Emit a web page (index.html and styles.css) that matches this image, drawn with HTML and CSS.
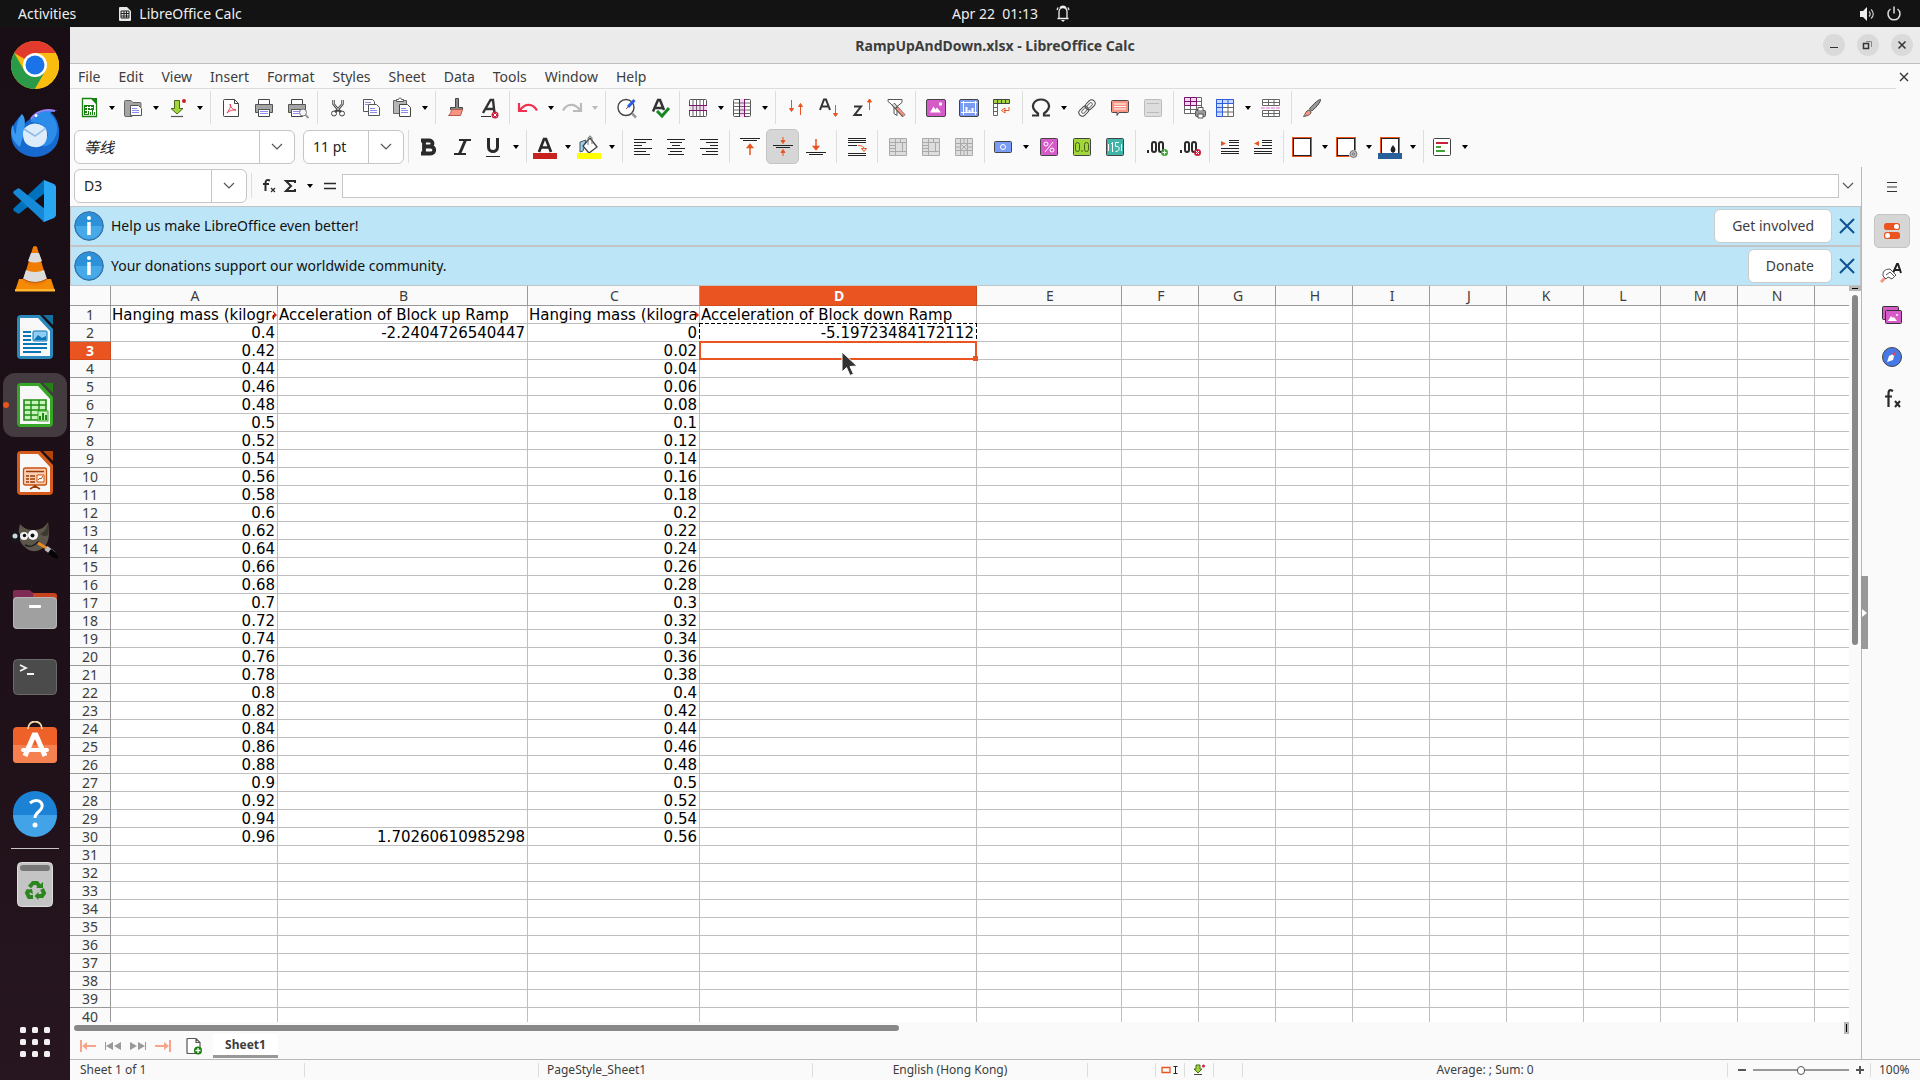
FILE: index.html
```html
<!DOCTYPE html>
<html lang="en">
<head>
<meta charset="utf-8">
<title>RampUpAndDown.xlsx - LibreOffice Calc</title>
<link rel="stylesheet" href="styles.css">
</head>
<body>
<header class="topbar">
  <div class="topbar-left">
    <button class="top-btn">Activities</button>
    <button class="top-btn top-app"><svg width="14" height="16" viewBox="0 0 14 16"><path d="M2 1h7l4 4v9a1 1 0 0 1-1 1H2a1 1 0 0 1-1-1V2a1 1 0 0 1 1-1z" fill="#e8e8e8"/><path d="M3 5h8v7H3zM3 7.500h8M3 10h8M6 5v7M8.500 5v7" fill="none" stroke="#222"/></svg>LibreOffice Calc</button>
  </div>
  <button class="top-btn top-clock"><span>Apr 22&nbsp; 01:13</span><svg width="14" height="17" viewBox="0 0 14 17" fill="none" stroke="#eee" stroke-width="1.300"><path d="M1.500 13.500h11M3 13.500V7c0-6 8-6 8 0v6.500M4 3C5 .5 9 .5 10 3M2 2.500L1 5M12 2.500l1 2.500"/><path d="M5 15h4l-2 2z" fill="#eee" stroke="none"/></svg></button>
  <div class="topbar-right">
    <svg width="16" height="16" viewBox="0 0 16 16"><path d="M1 5h3l4-4v14l-4-4H1z" fill="#eee"/><path d="M10 5.500c1.500 1.500 1.500 3.500 0 5M12 3.500c3 2.500 3 6.500 0 9" stroke="#ccc" stroke-width="1.200" fill="none"/></svg>
    <svg width="16" height="16" viewBox="0 0 16 16" fill="none" stroke="#ddd" stroke-width="1.500"><path d="M4.500 3a6 6 0 1 0 7 0M8 .5v7"/></svg>
  </div>
</header>
<div class="desktop">
<nav class="dock" aria-label="Dock">
  <button class="dock-item" aria-label="Google Chrome"><svg viewBox="0 0 48 48"><circle cx="24" cy="24" r="24" fill="#fbbc10"/><path d="M3.200 12A24 24 0 0 1 44.800 12H24L13.600 18z" fill="#e23b2e"/><path d="M3.200 12L13.600 30 24 36l0 0L24.500 48A24 24 0 0 1 3.200 12z" fill="#2b9a48"/><path d="M24 48L34.400 30H15l-1 0L24 36z" fill="#2b9a48"/><path d="M34.400 30L24 48a24 24 0 0 0 20.800-36H24z" fill="#fbbc10"/><circle cx="24" cy="24" r="12" fill="#fff"/><circle cx="24" cy="24" r="9.500" fill="#1a73e8"/></svg></button>
  <button class="dock-item" aria-label="Thunderbird"><svg viewBox="0 0 48 48"><path d="M11 5C4 12 0 19 0 26a24 22 0 0 0 48 0C49 14 44 5 36 1c4 0 7 0 11 1C34-1 23 2 19 10c-6 4-8 8-8 14 1-8 1-13 0-19z" fill="#1769cf"/><path d="M20 10c5-9 15-11 27-8-6 0-8 1-8 3 9 7 9 19 3 27-4 6-10 6-15 4l10-9c0-9-7-14-17-14z" fill="#2c8cea"/><path d="M11 5c4 4 3 10 2 18L9 38C-1 31-1 19 2 16c1 4 1 8 3 9 0-9 2-15 6-20z" fill="#3a9bf0"/><path d="M12 25a12 10 0 0 1 24-1c1 10-5 15-13 14s-11-6-11-13z" fill="#dcecfb"/><path d="M13 20l11 7 11-8" fill="none" stroke="#8fb9e5" stroke-width="1.500"/><path d="M20 10C26 1 36 0 44 2" fill="none" stroke="#9a7df0" stroke-width="2"/><circle cx="25" cy="6.500" r="1.500" fill="#fff"/></svg></button>
  <button class="dock-item" aria-label="Visual Studio Code"><svg viewBox="0 0 48 48"><path d="M33 3L3 31c-1 1-1 2 0 3l3 2c1 1 2 1 3 0L35 15z" fill="#0072bd"/><path d="M33 45L3 17c-1-1-1-2 0-3l3-2c1-1 2-1 3 0l26 21z" fill="#1689d8"/><path d="M33 3l10 4c1 1 2 2 2 3v28c0 1-1 2-2 3l-10 4c-1 0-1 0 0-1z" fill="#2aa7f2"/></svg></button>
  <button class="dock-item" aria-label="VLC"><svg viewBox="0 0 48 48"><path d="M8 34h32l4 12H4z" fill="#f58a07"/><path d="M4 44h40v2.500H4z" fill="#ffb52e"/><path d="M22 2q2-2 4 0l10 34q-12 9-24 0z" fill="#f07c04"/><path d="M20 8h8l3 8q-7 3-14 0zM15 25q9 4 18 0l3 9q-12 7-24 0z" fill="#dcdcdc"/><path d="M12 34q12 7 24 0" fill="none" stroke="#b75600"/></svg></button>
  <button class="dock-item" aria-label="LibreOffice Writer"><svg viewBox="0 0 48 48"><path d="M10 2h19l13 14v26a4 4 0 0 1-4 4H10a4 4 0 0 1-4-4V6a4 4 0 0 1 4-4z" fill="#2a88bd"/><path d="M9 5h18l12 13v25H9z" fill="#f8f8f8"/><path d="M32 2h10v10z" fill="#14719f"/><path d="M12 19h8M12 23h8M12 27h8M12 31h24M12 35h24M12 39h18" stroke="#0b76b5" stroke-width="2.200"/><rect x="22" y="18" width="14" height="10" rx="1" fill="#90cdf2" stroke="#0b76b5"/><path d="M23 27l4-5 4 3 4-2v4z" fill="#0b76b5"/></svg></button>
  <button class="dock-item active" aria-label="LibreOffice Calc"><svg viewBox="0 0 48 48"><path d="M10 2h19l13 14v26a4 4 0 0 1-4 4H10a4 4 0 0 1-4-4V6a4 4 0 0 1 4-4z" fill="#37a626"/><path d="M9 5h18l12 13v25H9z" fill="#f8f8f8"/><path d="M32 2h10v10z" fill="#258016"/><path d="M13 19h22v20H13z" fill="#c9f3bd" stroke="#1f8a12" stroke-width="1.600"/><path d="M13 24h22M13 29h22M13 34h22M20 19v20M28 19v20" stroke="#1f8a12" stroke-width="1.400"/><rect x="27" y="30" width="10" height="10" fill="#c9f3bd" stroke="#37a626"/><path d="M29 39v-4M32 39v-7M35 39v-5" stroke="#1f8a12" stroke-width="2"/></svg></button>
  <button class="dock-item" aria-label="LibreOffice Impress"><svg viewBox="0 0 48 48"><path d="M10 2h19l13 14v26a4 4 0 0 1-4 4H10a4 4 0 0 1-4-4V6a4 4 0 0 1 4-4z" fill="#d55b1d"/><path d="M9 5h18l12 13v25H9z" fill="#f8f8f8"/><path d="M32 2h10v10z" fill="#b34508"/><rect x="12.500" y="19" width="23" height="17" rx="2" fill="#fbd0b6" stroke="#c8500f" stroke-width="1.300"/><path d="M15 22.500h18M15 27h3M15 30h3M15 33h3M19 27h5M19 30h5M19 33h5M24 36v3M24 37l-5 3M24 37l5 3" stroke="#9c3b06" stroke-width="1.500"/><path d="M26 26h7v7h-7zM27 31l2-2 1 1 2-3" fill="#fff" stroke="#c8500f"/></svg></button>
  <button class="dock-item" aria-label="GIMP"><svg viewBox="0 0 48 48"><path d="M9 7c4 5 9 6 14 6 7 0 11-3 14-8 1 7 2 15-1 21-4 8-14 11-21 5C8 26 6 19 9 7z" fill="#5d574b"/><path d="M37 5c-1 7-4 10-8 12 3 2 6 3 8 1 1-5 1-9 0-13z" fill="#3c3931"/><ellipse cx="4.500" cy="20" rx="5" ry="6" fill="#15171b"/><circle cx="4" cy="19" r="2.500" fill="#c9d8df"/><circle cx="13" cy="19" r="4" fill="#eee"/><circle cx="22" cy="18" r="5" fill="#f8f8f8"/><circle cx="13.500" cy="18.500" r="1.700" fill="#111"/><circle cx="21.500" cy="18.500" r="2" fill="#111"/><path d="M14 28c6 3 10 0 14-4" stroke="#222" fill="none" stroke-width="1.500"/><path d="M27 26l10 6" stroke="#e88b24" stroke-width="3"/><path d="M35 31l8 6" stroke="#bbb" stroke-width="5"/><path d="M40 32c5 3 7 6 7 10-5-1-8-3-10-6z" fill="#050505"/></svg></button>
  <button class="dock-item" aria-label="Files"><svg viewBox="0 0 48 48"><path d="M2 8a3 3 0 0 1 3-3h13l4 3h21a3 3 0 0 1 3 3v10H2z" fill="#c7431f"/><path d="M2 8a3 3 0 0 1 3-3h13l4 3v12H2z" fill="#7e2b55"/><rect x="2" y="12" width="44" height="32" rx="4" fill="#a0a0a0"/><rect x="2.500" y="12.500" width="43" height="31" rx="4" fill="none" stroke="#b7b7b7"/><rect x="18" y="20" width="12" height="3" rx="1" fill="#fff"/></svg></button>
  <button class="dock-item" aria-label="Terminal"><svg viewBox="0 0 48 48"><rect x="2.500" y="6.500" width="43" height="35" rx="4" fill="#4b4b4b" stroke="#6b6b6b"/><path d="M9 12l6 3-6 3M16 21h7" fill="none" stroke="#f4f4f4" stroke-width="1.800"/></svg></button>
  <button class="dock-item" aria-label="Software"><svg viewBox="0 4 48 48"><rect x="2" y="10" width="44" height="36" rx="4" fill="#ee6128"/><path d="M2 28h44v14a4 4 0 0 1-4 4H6a4 4 0 0 1-4-4z" fill="#f58150"/><path d="M17 12c0-10 14-10 14 0" stroke="#f4d9a8" stroke-width="1.800" fill="none"/><path d="M14 39l9-21h2l9 21" fill="none" stroke="#fff" stroke-width="5"/><path d="M12 33h24" stroke="#fff" stroke-width="4" stroke-linecap="round"/></svg></button>
  <button class="dock-item" aria-label="Help"><svg viewBox="0 0 48 48"><circle cx="24" cy="24" r="22" fill="#1c82d6"/><path d="M2 26a22 22 0 0 0 44 0z" fill="#43a3e8"/><path d="M19 14c6-5 13-2 12 4-1 5-7 5-7 11" fill="none" stroke="#fff" stroke-width="3"/><circle cx="24" cy="36" r="2.500" fill="#fff"/></svg></button>
  <hr class="dock-rule">
  <button class="dock-item" aria-label="Trash"><svg viewBox="0 0 48 48"><rect x="6.500" y="2.500" width="35" height="44" rx="4" fill="#c4c4c4" stroke="#dedede"/><rect x="9" y="5" width="30" height="6" rx="3" fill="#777"/><g fill="none" stroke="#2b8620" stroke-width="4"><path d="M18.500 27l3.500-4h4l3 4M31 29l2 4-2 3h-4M22 37h-4l-2-4 2-3"/></g><path d="M25 28h7v-6zM27.500 32v8l-4-4zM14 30l7-1 1 5z" fill="#2b8620"/></svg></button>
  <button class="dock-item dock-apps" aria-label="Show applications"><svg viewBox="0 0 48 48" fill="#f2f0f1"><rect x="9" y="9" width="6" height="6" rx="1.500"/><rect x="21" y="9" width="6" height="6" rx="1.500"/><rect x="33" y="9" width="6" height="6" rx="1.500"/><rect x="9" y="21" width="6" height="6" rx="1.500"/><rect x="21" y="21" width="6" height="6" rx="1.500"/><rect x="33" y="21" width="6" height="6" rx="1.500"/><rect x="9" y="33" width="6" height="6" rx="1.500"/><rect x="21" y="33" width="6" height="6" rx="1.500"/><rect x="33" y="33" width="6" height="6" rx="1.500"/></svg></button>
</nav>
<main class="window">
  <div class="titlebar">
    <h1 class="title">RampUpAndDown.xlsx - LibreOffice Calc</h1>
    <div class="win-controls">
      <button class="win-btn" aria-label="Minimize"><svg viewBox="0 0 22 22"><path d="M7 13.500h8" stroke="#333"/></svg></button>
      <button class="win-btn" aria-label="Restore"><svg viewBox="0 0 22 22" fill="none"><path d="M6.500 9.500h5v5h-5z" stroke="#333" stroke-width="1.500"/><path d="M9 7.500h5.500V13" stroke="#888"/></svg></button>
      <button class="win-btn" aria-label="Close"><svg viewBox="0 0 22 22"><path d="M7.500 7.500l7 7M14.500 7.500l-7 7" stroke="#333" stroke-width="1.500"/></svg></button>
    </div>
  </div>
  <div class="menubar">
    <nav class="menus"><button>File</button><button>Edit</button><button>View</button><button>Insert</button><button>Format</button><button>Styles</button><button>Sheet</button><button>Data</button><button>Tools</button><button>Window</button><button>Help</button></nav>
    <button class="doc-close" aria-label="Close document"><svg width="10" height="10" viewBox="0 0 10 10"><path d="M1 1l8 8M9 1L1 9" stroke="#333" stroke-width="1.400"/></svg></button>
  </div>
  <div class="toolbar" role="toolbar" aria-label="Standard">
    <button class="tool split" aria-label="New"><svg viewBox="0 0 24 24"><path d="M5.500 2.500h9l5 5v13h-14z" fill="#fff" stroke="#18800f" stroke-width="1.300"/><path d="M14 2h6v7z" fill="#18800f"/><path d="M7 9h10v10H7z" fill="#18800f"/><path d="M8 11.500h8M8 14.500h8M8 17.500h3M10.500 10v8M13.500 10v3" stroke="#fff"/><path d="M12 14h7v5h-7z" fill="#fff"/><path d="M13.500 19v-3M15.500 19v-5M17.500 19v-3" stroke="#18800f"/></svg><i></i></button>
    <button class="tool split" aria-label="Open"><svg viewBox="0 0 24 24"><path d="M3.500 19.500v-14q0-1 1-1H10l2 2h7q1 0 1 1v4h-9v9h-6q-1.500 0-1.500-1z" fill="#a5a5a5" stroke="#666"/><path d="M9.500 9.500h8l3 3v7h-11z" fill="#fff" stroke="#555"/><path d="M11 12.500h5M11 14.500h7M11 16.500h7" stroke="#8b8bf0"/></svg><i></i></button>
    <button class="tool split" aria-label="Save"><svg viewBox="0 0 24 24"><path d="M9.500 4.500h5v8h3.500L12 18 6 12.500h3.500z" fill="#a3d63c" stroke="#4d6b1a"/><path d="M6 20.500h12" stroke="#555" stroke-width="1.200"/><circle cx="19" cy="5" r="2" fill="#c9211e"/></svg><i></i></button>
    <span class="sep"></span>
    <button class="tool" aria-label="Export as PDF"><svg viewBox="0 0 24 24"><path d="M5.500 3.500h10l4 4v13h-14q-1 0-1-1v-15q0-1 1-1zM15.500 3.500v4h4" fill="#fff" stroke="#444"/><path d="M11 8c1 2 .5 4-3 9 3-3 6-3 9-3-3 0-5-2-6-6z" fill="none" stroke="#f0314f"/></svg></button>
    <button class="tool" aria-label="Print"><svg viewBox="0 0 24 24"><path d="M6.500 8V3.500h11V8M6.500 12.500h11v8h-11z" fill="#fff" stroke="#444"/><path d="M3.500 8.500h17v8h-3v-3h-11v3h-3z" fill="#a5a5a5" stroke="#555"/><path d="M8 15.500h8M8 17.500h8" stroke="#8b8bf0"/></svg></button>
    <button class="tool" aria-label="Print preview"><svg viewBox="0 0 24 24"><path d="M6.500 8V3.500h11V8M6.500 12.500h11v8h-11z" fill="#fff" stroke="#444"/><path d="M3.500 8.500h17v8h-3v-3h-11v3h-3z" fill="#a5a5a5" stroke="#555"/><path d="M8 15.500h7M8 17.500h6" stroke="#8b8bf0"/><circle cx="18" cy="16.500" r="3.500" fill="#f4f4f4" stroke="#777"/><path d="M20.500 19l3 3" stroke="#999" stroke-width="2"/></svg></button>
    <span class="sep"></span>
    <button class="tool" aria-label="Cut"><svg viewBox="0 0 24 24" fill="none" stroke="#444"><path d="M7.500 4v4l5 6 2.500 2M16.500 4v4l-5 6L9 16" stroke-width="2.500"/><path d="M7.500 4v4l5 6M16.500 4v4l-5 6" stroke="#ccc"/><circle cx="8" cy="17.500" r="2.500"/><circle cx="16" cy="17.500" r="2.500"/></svg></button>
    <button class="tool" aria-label="Copy"><svg viewBox="0 0 24 24" fill="#fff" stroke="#555"><path d="M4.500 3.500h9l2 2v10h-11z"/><path d="M9.500 8.500h8l3 3v8h-11z"/><path d="M6 6.500h6M6 8.500h3M11 12.500h5M11 14.500h7M11 16.500h7" stroke="#8b8bf0"/></svg></button>
    <button class="tool split" aria-label="Paste"><svg viewBox="0 0 24 24"><path d="M3.500 4.500h13v13h-13z" fill="#b5b5b5" stroke="#666"/><path d="M6.500 5.500v-2h2c0-2 3-2 3 0h2v2z" fill="#fff" stroke="#555"/><path d="M9.500 8.500h8l3 3v9h-11z" fill="#fff" stroke="#444"/><path d="M11 12.500h5M11 14.500h7M11 16.500h7" stroke="#8b8bf0"/></svg><i></i></button>
    <span class="sep"></span>
    <button class="tool" aria-label="Clone formatting"><svg viewBox="0 0 24 24"><path d="M11.500 2.500h3v9h4v2h-12v-2h5z" fill="#888" stroke="#444"/><path d="M7.500 13.500h11l-2 6H4.500q3-2 3-6z" fill="#fa9482" stroke="#b5594a"/></svg></button>
    <button class="tool" aria-label="Clear formatting"><svg viewBox="0 0 24 24"><path d="M6 17L13.500 4H16l1.500 13M9 13h8" fill="none" stroke="#333" stroke-width="2.400"/><path d="M4 20.500h10" stroke="#333"/><circle cx="18" cy="19" r="3.500" fill="#c9213d"/><path d="M16.500 17.500l3 3M19.500 17.500l-3 3" stroke="#fff"/></svg></button>
    <span class="sep"></span>
    <button class="tool split" aria-label="Undo"><svg viewBox="0 0 24 24" fill="none" stroke="#f0314f" stroke-width="2.200"><path d="M3 7v8h8M4 14C9 7 17 7 21 14.500"/></svg><i></i></button>
    <button class="tool split off" aria-label="Redo" disabled><svg viewBox="0 0 24 24" fill="none" stroke="#bbb" stroke-width="2.200"><path d="M21 7v8h-8M20 14C15 7 7 7 3 14.500"/></svg><i></i></button>
    <span class="sep"></span>
    <button class="tool" aria-label="Find and replace"><svg viewBox="0 0 24 24" fill="none"><circle cx="12" cy="11.500" r="8" fill="#fff" stroke="#444" stroke-width="1.400"/><path d="M18 17.500l4 4" stroke="#999" stroke-width="2.500"/><path d="M20.500 4L14 11" stroke="#2c5de0" stroke-width="3"/><path d="M14 11l-2 2" stroke="#a44"/></svg></button>
    <button class="tool" aria-label="Spelling"><svg viewBox="0 0 24 24" fill="none"><path d="M6 15.500L11 4h2l4 10M8 12h8" stroke="#333" stroke-width="2.500"/><path d="M10 15l5 5 7-8" stroke="#158a24" stroke-width="3"/></svg></button>
    <span class="sep"></span>
    <button class="tool split" aria-label="Row"><svg viewBox="0 0 24 24" fill="none"><rect x="3.500" y="3.500" width="17" height="17" rx="1" fill="#fff" stroke="#555"/><path d="M3 9.500h18v5H3z" fill="#f5d6f1"/><path d="M7 3v18M10.500 3v18M14 3v18M17.500 3v18" stroke="#666"/><path d="M3 9.500h18M3 14.500h18" stroke="#7a156d"/></svg><i></i></button>
    <button class="tool split" aria-label="Column"><svg viewBox="0 0 24 24" fill="none"><rect x="3.500" y="3.500" width="17" height="17" rx="1" fill="#fff" stroke="#555"/><path d="M9.500 3v18h5V3z" fill="#f5d6f1"/><path d="M3 7h18M3 10.500h18M3 14h18M3 17.500h18" stroke="#666"/><path d="M9.500 3v18M14.500 3v18" stroke="#7a156d"/></svg><i></i></button>
    <span class="sep"></span>
    <button class="tool" aria-label="Sort"><svg viewBox="0 0 24 24" stroke="#e95420" fill="#e95420"><path d="M7.500 4v9M5.500 12.500h4l-2 3zM16.500 10v9M14.500 10.500h4l-2-3z"/></svg></button>
    <button class="tool" aria-label="Sort ascending"><svg viewBox="0 0 24 24" fill="none"><path d="M3 14L7 3.500h2L13 14M4.500 10.500h7" stroke="#333" stroke-width="2"/><path d="M18.500 9v9M16.500 17.500h4l-2 3z" stroke="#e95420" fill="#e95420"/></svg></button>
    <button class="tool" aria-label="Sort descending"><svg viewBox="0 0 24 24" fill="none"><path d="M4 10.500h7L4.500 19H12" stroke="#333" stroke-width="2"/><path d="M19.500 5v9M17.500 6h4l-2-3z" stroke="#e95420" fill="#e95420"/></svg></button>
    <button class="tool" aria-label="AutoFilter"><svg viewBox="0 0 24 24" fill="#fff" stroke="#555"><path d="M5 3.500h14v3l-5 4v9l-3-2v-7l-6-5z"/><path d="M10 8l11 12" stroke="#555" stroke-width="4"/><path d="M10 8l3 3" stroke="#ddd" stroke-width="2"/><path d="M14 12l7 7.500" stroke="#fa9482" stroke-width="2.500"/></svg></button>
    <span class="sep"></span>
    <button class="tool" aria-label="Image"><svg viewBox="0 0 24 24"><rect x="2.500" y="3.500" width="19" height="17" rx="1.500" fill="#d65ac8" stroke="#444"/><path d="M6 16.500l3.500-6 2 3 1.500-2 4 5z" fill="#fff"/><circle cx="16.500" cy="8" r="1.700" fill="#fff"/></svg></button>
    <button class="tool" aria-label="Chart"><svg viewBox="0 0 24 24"><rect x="2.500" y="3.500" width="19" height="17" rx="1.500" fill="#7a9cf5" stroke="#444"/><path d="M4 6.500h16M4 16.500h16M6.500 5v14M18.500 5v14" stroke="#fff"/><path d="M9.500 16v-5M12.500 16v-2M15.500 16v-4" stroke="#fff" stroke-width="2"/></svg></button>
    <button class="tool" aria-label="Pivot table"><svg viewBox="0 0 24 24" fill="none"><path d="M3.500 7.500v12h4v-12M3.500 11.500h4M3.500 15.500h4" stroke="#666"/><path d="M3.500 3.500h16v4h-16z" fill="#a3d63c" stroke="#444"/><path d="M7.500 3v4M11.500 3v4M15.500 3v4" stroke="#444"/><path d="M19 11v3.500h-5M15 12l-3.500 2.500L15 17z" stroke="#e95420" fill="none"/></svg></button>
    <span class="sep"></span>
    <button class="tool split" aria-label="Special character"><svg viewBox="0 0 24 24" fill="none"><path d="M3 19.500h6v-2C-1 10 6 3.500 12 3.500s13 6.500 3 14v2h6" stroke="#333" stroke-width="2.200"/></svg><i></i></button>
    <button class="tool" aria-label="Hyperlink"><svg viewBox="0 0 24 24" fill="none"><g transform="rotate(-45 12 12)"><rect x="2" y="8.500" width="11" height="7" rx="3.500" stroke="#444"/><rect x="5" y="10.500" width="7" height="3" rx="1.500" stroke="#777"/><rect x="11" y="8.500" width="11" height="7" rx="3.500" stroke="#444"/><rect x="12" y="10.500" width="7" height="3" rx="1.500" stroke="#777"/></g></svg></button>
    <button class="tool" aria-label="Comment"><svg viewBox="0 0 24 24"><path d="M4.500 4.500h15q1 0 1 1v10q0 1-1 1H11l-2 3v-3H4.500q-1 0-1-1v-10q0-1 1-1z" fill="#fa9482" stroke="#4b4b4b"/><path d="M6 8h12M6 10.500h12M6 13h12" stroke="#fff"/></svg></button>
    <button class="tool" aria-label="Headers and footers" disabled><svg viewBox="0 0 24 24"><rect x="3.500" y="3.500" width="17" height="17" rx="1" fill="#ddd" stroke="#bbb"/><path d="M6 7.500h12M6 16.500h12" stroke="#bbb"/></svg></button>
    <span class="sep"></span>
    <button class="tool" aria-label="Print area"><svg viewBox="0 0 24 24" fill="none"><path d="M2.500 1.500h17v16h-17zM2.500 5.500h17M2.500 9.500h17M2.500 13.500h17M8.500 1v17M14.500 1v17" fill="#fff" stroke="#666"/><path d="M2.500 1.500h12v8h-12zM2.500 5.500h12M8.500 1.500v8" fill="#f5d6f1" stroke="#7a156d"/><rect x="13.500" y="14.500" width="10" height="6" rx="1" fill="#999" stroke="#555"/><path d="M16 14.500v-3h5v3M16 18h5v4h-5z" fill="#fff" stroke="#555"/></svg></button>
    <button class="tool split" aria-label="Freeze rows and columns"><svg viewBox="0 0 24 24" fill="#fff" stroke="#666"><path d="M3.500 3.500h17v17h-17zM3.500 7.500h17M3.500 11.500h17M3.500 16h17M9.500 3v18M15 3v18"/><path d="M3.500 3.500h17v4h-11v13h-6zM9.500 3v5M15 3v4M3.500 11.500h6M3.500 16h6M3.500 7.500h6" fill="#cbd9ff" stroke="#2c5de0"/></svg><i></i></button>
    <button class="tool" aria-label="Split window"><svg viewBox="0 0 24 24" fill="#fff" stroke="#666"><path d="M3.500 3.500h17v6h-17zM3.500 6.500h17M9.500 3.500v6M15 3.500v6M3.500 14.500h17v6h-17zM3.500 17.500h17M9.500 14.500v6M15 14.500v6"/><path d="M2 12h20" stroke="#e66fd6" stroke-dasharray="4 1"/></svg></button>
    <span class="sep"></span>
    <button class="tool" aria-label="Draw functions"><svg viewBox="0 0 24 24"><path d="M20.500 3.500c1 2-7 11-9 11.500l-2-2c1-2 9-10 11-9.500z" fill="#999" stroke="#444"/><path d="M9 14l2 2c0 3-4 4-7.500 4.500 2-2 2-6 5.500-6.500z" fill="#fa9482" stroke="#555"/></svg></button>
  </div>
  <div class="toolbar" role="toolbar" aria-label="Formatting">
    <div class="combo font-combo"><input class="cjk" aria-label="Font name" value="等线"><button aria-label="Font list"><svg width="12" height="8" viewBox="0 0 12 8"><path d="M1 1l5 5 5-5"/></svg></button></div>
    <div class="combo size-combo"><input aria-label="Font size" value="11 pt"><button aria-label="Size list"><svg width="12" height="8" viewBox="0 0 12 8"><path d="M1 1l5 5 5-5"/></svg></button></div>
    <span class="sep"></span>
    <button class="tool" aria-label="Bold"><svg viewBox="0 0 24 24" fill="none" stroke="#2a2a2a" stroke-width="3.800"><path d="M4 5.500h8.500c4 0 4 6 0 6H7h6.500c5 0 5 7 0 7H4M7 5v14"/></svg></button>
    <button class="tool" aria-label="Italic"><svg viewBox="0 0 24 24" fill="none" stroke="#2a2a2a"><path d="M9 5h12M4 19h12" stroke-width="1.800"/><path d="M15.500 5l-6 14" stroke-width="3"/></svg></button>
    <button class="tool split" aria-label="Underline"><svg viewBox="0 0 24 24" fill="none" stroke="#2a2a2a"><path d="M7.500 3v9c0 6 9 6 9 0V3" stroke-width="3"/><path d="M5 21.500h14"/></svg><i></i></button>
    <span class="sep"></span>
    <button class="tool split" aria-label="Font color"><svg viewBox="0 0 24 24" fill="none"><path d="M6 17l5-13h2l5 13M8 12.500h8" stroke="#2a2a2a" stroke-width="2.700"/><path d="M0 18h24v6H0z" fill="#c9211e"/></svg><i></i></button>
    <button class="tool split" aria-label="Highlighting"><svg viewBox="0 0 24 24" fill="none"><path d="M3 17V7l6-2-3 11z" fill="#8fd0f0" stroke="#555"/><path d="M13 3l7 9-8 6-6-7z" fill="#fff" stroke="#444" stroke-width="1.300"/><path d="M11 10V3q2-4 4 0v6" stroke="#777"/><path d="M0 18h24v6H0z" fill="#ff0"/></svg><i></i></button>
    <span class="sep"></span>
    <button class="tool" aria-label="Align left"><svg viewBox="0 0 24 24"><path d="M3 4.500h18M3 7.500h12M3 10.500h8M3 13.500h18M3 16.500h12M3 19.500h16" stroke="#222"/></svg></button>
    <button class="tool" aria-label="Align center"><svg viewBox="0 0 24 24"><path d="M3 4.500h18M6 7.500h12M8 10.500h8M3 13.500h18M6 16.500h12M4 19.500h16" stroke="#222"/></svg></button>
    <button class="tool" aria-label="Align right"><svg viewBox="0 0 24 24"><path d="M3 4.500h18M9 7.500h12M13 10.500h8M3 13.500h18M9 16.500h12M5 19.500h16" stroke="#222"/></svg></button>
    <span class="sep"></span>
    <button class="tool" aria-label="Align top"><svg viewBox="0 0 24 24"><path d="M2 3.500h20M5 5.500h14" stroke="#222"/><path d="M12 20v-8M9.500 12.500h5L12 9.500z" stroke="#e95420" fill="#e95420" stroke-width="1.500"/></svg></button>
    <button class="tool pressed" aria-label="Center vertically"><svg viewBox="0 0 24 24"><path d="M2 10.500h20M5 12.500h14" stroke="#222"/><path d="M12 2v3M10 5.500h4l-2 3zM12 21v-3M10 17.500h4l-2-3z" stroke="#e95420" fill="#e95420"/></svg></button>
    <button class="tool" aria-label="Align bottom"><svg viewBox="0 0 24 24"><path d="M2 17.500h20M5 19.500h14" stroke="#222"/><path d="M12 4v8M9.500 11.500h5L12 14.500z" stroke="#e95420" fill="#e95420" stroke-width="1.500"/></svg></button>
    <span class="sep"></span>
    <button class="tool" aria-label="Wrap text"><svg viewBox="0 0 24 24" fill="none"><path d="M3 3.500h18M3 5.500h18M3 7.500h18M3 10.500h9M3 18.500h18M3 20.500h18" stroke="#222"/><path d="M13 10.500q6 0 6 3.500M16.500 13.500h5l-2.500 3z" stroke="#e95420"/></svg></button>
    <span class="sep"></span>
    <button class="tool" aria-label="Merge and center" disabled><svg viewBox="0 0 24 24" fill="#ddd" stroke="#aaa"><path d="M3.500 3.500h17v17h-17zM3.500 7.500h17M3.500 16.500h17M9.500 7.500v9M3.500 10.500h6M3.500 13.500h6M16.500 7.500v9M9.500 3.500v4M14.500 3.500v4M9.500 16.500v4"/></svg></button>
    <button class="tool" aria-label="Merge cells" disabled><svg viewBox="0 0 24 24" fill="#ddd" stroke="#aaa"><path d="M3.500 3.500h17v17h-17zM3.500 7.500h17M3.500 16.500h17M9.500 7.500v9M3.500 10.500h6M3.500 13.500h6M16.500 7.500v9M9.500 3.500v4M14.500 3.500v4M9.500 16.500v4"/></svg></button>
    <button class="tool" aria-label="Split cells" disabled><svg viewBox="0 0 24 24" fill="#ddd" stroke="#aaa"><path d="M3.500 3.500h17v17h-17zM3.500 8.500h17M3.500 15.500h17M8.500 3.500v17M15.500 3.500v17M3.500 12h5M15.500 12h5M8.500 9l7 6M15.500 9l-7 6M12 3.500v5M12 15.500v5"/></svg></button>
    <span class="sep"></span>
    <button class="tool split" aria-label="Currency"><svg viewBox="0 0 24 24"><rect x="3.500" y="6.500" width="17" height="11" rx="1" fill="#7a9cf5" stroke="#444"/><circle cx="12" cy="12" r="2.500" fill="none" stroke="#fff"/></svg><i></i></button>
    <button class="tool" aria-label="Percent"><svg viewBox="0 0 24 24"><rect x="3.500" y="3.500" width="17" height="17" rx="1" fill="#d65ac8" stroke="#444"/><g fill="none" stroke="#fff"><path d="M16 7L8 17"/><circle cx="9" cy="9" r="2"/><circle cx="15" cy="15" r="2"/></g></svg></button>
    <button class="tool num" aria-label="Number"><svg viewBox="0 0 24 24"><rect x="3.500" y="3.500" width="17" height="17" rx="1" fill="#a3d63c" stroke="#444"/><g fill="none" stroke="#45621a"><rect x="5.500" y="7.500" width="4" height="9" rx="2"/><rect x="14.500" y="7.500" width="4" height="9" rx="2"/><path d="M12 15v2"/></g></svg></button>
    <button class="tool" aria-label="Date"><svg viewBox="0 0 24 24"><rect x="3.500" y="3.500" width="17" height="17" rx="1" fill="#3fb5a9" stroke="#444"/><path d="M5.500 9v7M18.500 9v7M8 9l1.500-1.500V17M16 7.500h-3.500v4c5-1 5 5 0 5" stroke="#fff" fill="none"/></svg></button>
    <span class="sep"></span>
    <button class="tool" aria-label="Add decimal place"><svg viewBox="0 0 24 24" fill="none" stroke="#2a2a2a" stroke-width="2"><path d="M4 15v3"/><rect x="8" y="7" width="4" height="10" rx="2"/><rect x="15" y="7" width="4" height="10" rx="2"/><circle cx="20.500" cy="17.500" r="3.500" fill="#3fa535" stroke="none"/><path d="M18.500 17.500h4M20.500 15.500v4" stroke="#fff" stroke-width="1"/></svg></button>
    <button class="tool" aria-label="Delete decimal place"><svg viewBox="0 0 24 24" fill="none" stroke="#2a2a2a" stroke-width="2"><path d="M4 15v3"/><rect x="8" y="7" width="4" height="10" rx="2"/><rect x="15" y="7" width="4" height="10" rx="2"/><circle cx="20.500" cy="17.500" r="3.500" fill="#c9213d" stroke="none"/><path d="M19 16l3 3M22 16l-3 3" stroke="#fff" stroke-width="1"/></svg></button>
    <span class="sep"></span>
    <button class="tool" aria-label="Increase indent"><svg viewBox="0 0 24 24"><path d="M11 5.500h10M11 7.500h10M11 10.500h10M3 13.500h18M3 16.500h18M3 18.500h18" stroke="#222"/><path d="M3 6l5 2.500-5 2.500z" fill="#e95420"/></svg></button>
    <button class="tool" aria-label="Decrease indent"><svg viewBox="0 0 24 24"><path d="M11 5.500h10M11 7.500h10M11 10.500h10M3 13.500h18M3 16.500h18M3 18.500h18" stroke="#222"/><path d="M8 6L3 8.500 8 11z" fill="#e95420"/></svg></button>
    <span class="sep"></span>
    <button class="tool split" aria-label="Borders"><svg viewBox="0 0 24 24" fill="#fff"><rect x="2.500" y="2.500" width="19" height="19" stroke="#e95420"/><rect x="3.500" y="3.500" width="17" height="17" stroke="#222"/></svg><i></i></button>
    <button class="tool split" aria-label="Border style"><svg viewBox="0 0 24 24" fill="#fff"><rect x="2.500" y="2.500" width="19" height="19" stroke="#e95420"/><rect x="3.500" y="3.500" width="17" height="17" stroke="#222"/><circle cx="19.500" cy="19.500" r="4.500" fill="#fafafa"/><circle cx="19.500" cy="19" r="3.500" fill="#bbb" stroke="#777"/><circle cx="19.500" cy="19" r="1" stroke="#666"/></svg><i></i></button>
    <button class="tool split" aria-label="Border color"><svg viewBox="0 0 24 24" fill="#fff"><rect x="2.500" y="2.500" width="19" height="19" stroke="#e95420"/><rect x="3.500" y="3.500" width="17" height="17" stroke="#222"/><path d="M15 10q5 6 0 8-5-2 0-8z" fill="#222"/><path d="M0 18h24v6H0z" fill="#2a6099"/></svg><i></i></button>
    <span class="sep"></span>
    <button class="tool split" aria-label="Conditional formatting"><svg viewBox="0 0 24 24"><rect x="3.500" y="3.500" width="17" height="17" rx="1" fill="#fff" stroke="#444"/><path d="M6 8h12" stroke="#c9213d" stroke-width="2"/><path d="M6 12h5M6 16h9" stroke="#3fa535" stroke-width="2"/></svg><i></i></button>
  </div>
  <div class="workspace">
    <section class="doc">
      <div class="formula-bar">
        <div class="combo name-combo"><input aria-label="Name box" value="D3"><button aria-label="Named ranges"><svg width="12" height="8" viewBox="0 0 12 8"><path d="M1 1l5 5 5-5"/></svg></button></div>
        <span class="sep"></span>
        <button class="fbtn" aria-label="Function wizard"><svg width="16" height="16" viewBox="0 0 16 16" fill="none" stroke="#2a2a2a"><path d="M9 2.500C6 1 4.500 2.500 4.500 5v8M2 6h6" stroke-width="2"/><path d="M10 10l4 4M14 10l-4 4" stroke-width="1.200"/></svg></button>
        <button class="fbtn" aria-label="Select function"><svg width="14" height="16" viewBox="0 0 14 16" fill="none" stroke="#2a2a2a" stroke-width="2"><path d="M12 5V3H3l5 5-5 5h9v-2"/></svg></button>
        <button class="fbtn arrow" aria-label="More functions"><i></i></button>
        <button class="fbtn" aria-label="Formula"><svg width="14" height="16" viewBox="0 0 14 16"><path d="M1 5.500h12M1 10.500h12" stroke="#2a2a2a" stroke-width="1.500"/></svg></button>
        <input class="formula" aria-label="Input line">
        <button class="expand" aria-label="Expand formula bar"><svg width="12" height="8" viewBox="0 0 12 8"><path d="M1 1l5 5 5-5"/></svg></button>
      </div>
      <div class="infobar"><svg width="30" height="30" viewBox="0 0 30 30"><circle cx="15" cy="15" r="14.300" fill="#2d91da" stroke="#38699a"/><path d="M2 15a13 13 0 0 0 26 0z" fill="#48a9e8"/><circle cx="15" cy="7" r="2" fill="#fff"/><path d="M15 11v13" stroke="#fff" stroke-width="3.500"/></svg><span>Help us make LibreOffice even better!</span><button class="info-btn">Get involved</button><button class="info-close" aria-label="Close"><svg width="16" height="16" viewBox="0 0 16 16"><path d="M1 1l14 14M15 1L1 15"/></svg></button></div>
      <div class="infobar"><svg width="30" height="30" viewBox="0 0 30 30"><circle cx="15" cy="15" r="14.300" fill="#2d91da" stroke="#38699a"/><path d="M2 15a13 13 0 0 0 26 0z" fill="#48a9e8"/><circle cx="15" cy="7" r="2" fill="#fff"/><path d="M15 11v13" stroke="#fff" stroke-width="3.500"/></svg><span>Your donations support our worldwide community.</span><button class="info-btn">Donate</button><button class="info-close" aria-label="Close"><svg width="16" height="16" viewBox="0 0 16 16"><path d="M1 1l14 14M15 1L1 15"/></svg></button></div>
      <div class="sheet-area">
        <div class="grid-clip">
          <table class="grid">
            <colgroup><col class="c-head"><col class="c-a"><col class="c-b"><col class="c-c"><col class="c-d"><col class="c-e"><col><col><col><col><col><col><col><col><col><col></colgroup>
            <thead><tr id="heads"></tr></thead>
            <tbody id="rows"></tbody>
          </table>
        </div>
        <div class="vscroll"><div class="vsplit"></div><div class="vthumb"></div></div>
      </div>
      <div class="hscroll"><div class="hthumb"></div><div class="hsplit"></div></div>
      <div class="tabs">
        <button class="nav-btn" aria-label="First sheet"><svg width="16" height="12" viewBox="0 0 16 12"><path d="M1 0v12" stroke="#f5a58a" stroke-width="2"/><path d="M2 6l5-4v3h9v2H7v3z" fill="#f5a58a"/></svg></button>
        <button class="nav-btn" aria-label="Previous sheet"><svg width="16" height="12" viewBox="0 0 16 12" fill="#999"><path d="M0 2h1v8H0zM8 2v8L1 6zM16 2v8L9 6z"/></svg></button>
        <button class="nav-btn" aria-label="Next sheet"><svg width="16" height="12" viewBox="0 0 16 12" fill="#999"><path d="M15 2h1v8h-1zM0 2v8l7-4zM8 2v8l7-4z"/></svg></button>
        <button class="nav-btn" aria-label="Last sheet"><svg width="16" height="12" viewBox="0 0 16 12"><path d="M15 0v12" stroke="#f5a58a" stroke-width="2"/><path d="M14 6L9 2v3H0v2h9v3z" fill="#f5a58a"/></svg></button>
        <button class="nav-btn add" aria-label="Add sheet"><svg width="16" height="18" viewBox="0 0 16 18"><path d="M2 1.500h8l4 4v11H2q-1 0-1-1v-13q0-1 1-1zM10 1.500v4h4" fill="#fff" stroke="#555" stroke-width="1.200"/><circle cx="12" cy="13.500" r="4" fill="#18800f"/><path d="M9.500 13.500h5M12 11v5" stroke="#fff" stroke-width="1.300"/></svg></button>
        <button class="tab">Sheet1</button>
      </div>
    </section>
    <aside class="sidebar">
      <button class="side-handle" aria-label="Hide sidebar"><svg width="5" height="8" viewBox="0 0 5 8"><path d="M0 0l5 4-5 4z" fill="#fff"/></svg></button>
      <button class="side-menu" aria-label="Sidebar settings"><svg width="10" height="10" viewBox="0 0 10 10"><path d="M0 .5h10M0 5h10M0 9.500h10" stroke="#333"/></svg></button>
      <button class="side-btn pressed" aria-label="Properties"><svg viewBox="0 0 24 24"><rect x="4" y="4" width="16" height="7" rx="2.500" fill="#e95420"/><rect x="4" y="13" width="16" height="7" rx="2.500" fill="#e95420"/><circle cx="16.500" cy="7.500" r="2.500" fill="#fff"/><circle cx="7.500" cy="16.500" r="2.500" fill="#fff"/></svg></button>
      <button class="side-btn" aria-label="Styles"><svg viewBox="0 0 24 24" fill="none"><path d="M13 12l4-9h1l3 9M14 9h7" stroke="#222" stroke-width="2"/><path d="M1 21l5-5" stroke="#fa9482" stroke-width="3"/><path d="M3 15q-1-7 7-7l6 6-4 4-4-2-2 2z" fill="#fff" stroke="#555"/><path d="M6 14l4-3 4 4" stroke="#555"/></svg></button>
      <button class="side-btn" aria-label="Gallery"><svg viewBox="0 0 24 24"><rect x="2.500" y="3.500" width="16" height="13" rx="1" fill="#d65ac8" stroke="#333"/><rect x="5.500" y="7.500" width="16" height="13" rx="1" fill="#d65ac8" stroke="#333"/><path d="M8 18l3-5 2 2 1-1 3 4z" fill="#fff"/><circle cx="17" cy="12" r="1" fill="#fff"/></svg></button>
      <button class="side-btn" aria-label="Navigator"><svg viewBox="0 0 24 24"><circle cx="12" cy="12" r="9.500" fill="#4679e8" stroke="#444"/><path d="M7 17l2-6 4-2 3-2-2 4-1 4z" fill="#fff"/><path d="M12 9l5-3-3 5z" fill="#e23b4e"/></svg></button>
      <button class="side-btn" aria-label="Functions"><svg viewBox="0 0 24 24" fill="none" stroke="#2a2a2a"><path d="M13 4C9 2 8.500 4 8.500 7v13M5 9.500h7" stroke-width="2.200"/><path d="M15 14l5 6M20 14l-5 6" stroke-width="2"/></svg></button>
    </aside>
  </div>
  <footer class="statusbar">
    <span>Sheet 1 of 1</span><span></span><span class="style">PageStyle_Sheet1</span><span class="mid">English (Hong Kong)</span><span></span>
    <span class="mid"><svg width="18" height="10" viewBox="0 0 18 10" fill="none"><path d="M1 2.500h8v5H1z" stroke="#e95420" stroke-width="1.300"/><path d="M12.500 1.500h4M12.500 8.500h4M14.500 1.500v7" stroke="#222"/></svg></span>
    <span class="mid"><svg width="14" height="12" viewBox="0 0 14 12"><path d="M4 1h4v4h2L6 9 2 5h2z" fill="#a3d63c" stroke="#4d6b1a"/><path d="M2 10.500h8" stroke="#444"/><circle cx="11.500" cy="2" r="1.500" fill="#c9213d"/></svg></span><span></span>
    <span class="mid">Average: ; Sum: 0</span>
    <span class="zoom"><button aria-label="Zoom out"><svg width="8" height="8" viewBox="0 0 8 8"><path d="M0 4h8" stroke="#555" stroke-width="2"/></svg></button><input type="range" aria-label="Zoom" min="0" max="100" value="50"><button aria-label="Zoom in"><svg width="8" height="8" viewBox="0 0 8 8"><path d="M0 4h8M4 0v8" stroke="#555" stroke-width="2"/></svg></button></span>
    <span class="pct">100%</span>
  </footer>
</main>
</div>
<script src="script.js"></script>
</body>
</html>
```
FILE: styles.css
```css
* { box-sizing: border-box; }
body {
  margin: 0;
  height: 100vh;
  display: flex;
  flex-direction: column;
  overflow: hidden;
  font: 14px/20px "Noto Sans", "Noto Sans CJK SC", sans-serif;
  color: #3d3d3d;
  background: #1b0f17;
}
button, input { font: inherit; color: inherit; margin: 0; }
button { padding: 0; border: 0; background: none; display: flex; align-items: center; justify-content: center; }
input { min-width: 0; border: 0; outline: 0; }
svg { display: block; flex: none; }

.topbar { height: 27px; flex: none; display: flex; align-items: center; background: #131313; color: #eee; }
.topbar-left { flex: 0 0 calc(50% - 8px); display: flex; gap: 42px; padding-left: 18px; }
.top-app { gap: 7px; }
.top-clock { gap: 18px; }
.topbar-right { margin-left: auto; display: flex; gap: 11px; padding-right: 18px; }

.desktop { flex: 1; min-height: 0; display: flex; }
.dock { width: 70px; flex: none; display: flex; flex-direction: column; padding: 4px 3px; background: linear-gradient(#190e15, #1e1018 60%, #27161f); }
.dock-item { height: 64px; margin: 2px 0; border-radius: 12px; position: relative; }
.dock-item svg { width: 48px; height: 48px; }
.dock-item.active { background: #443b41; }
.dock-item.active::before { content: ""; position: absolute; left: 0; top: 29px; width: 6px; height: 6px; border-radius: 50%; background: #e95420; }
.dock-rule { width: 48px; height: 1px; margin: 1px auto; border: 0; background: #c8c3c6; flex: none; }
.dock-apps { margin-top: auto; }

.window { flex: 1; min-width: 0; display: flex; flex-direction: column; background: #fafafa; }
.titlebar { height: 37px; flex: none; display: grid; grid-template-columns: 1fr auto 1fr; align-items: center; background: #ebebeb; border-bottom: 1px solid #bfbfbf; }
.title { grid-column: 2; margin: 0; padding-top: 2px; font-size: 14px; font-weight: 700; }
.win-controls { display: flex; justify-content: flex-end; gap: 12px; padding-right: 7px; }
.win-btn { width: 22px; height: 22px; border-radius: 50%; background: #dadada; }
.win-btn svg { width: 22px; height: 22px; }
.menubar { height: 25px; flex: none; display: flex; }
.menus { flex: 1; display: flex; gap: 2px; padding-top: 2px; border-bottom: 1px solid #dcdcdc; }
.menus button { padding: 0 8px; }
.doc-close { width: 24px; padding-right: 8px; }

.toolbar { height: 39px; flex: none; display: flex; align-items: center; padding: 0 0 2px 4px; }
.tool { width: 33px; height: 35px; flex: none; position: relative; }
.tool svg { width: 24px; height: 24px; }
.tool.split { width: 44px; justify-content: flex-start; padding-left: 3px; gap: 8px; }
.tool i, .fbtn i { border: 3px solid transparent; border-top: 4px solid #000; border-bottom: 0; }
.tool.off i { border-top-color: #bbb; }
.pressed { background: #d6d6d6; border: 1px solid #c4c4c4; border-radius: 5px; }
.sep { width: 1px; height: 33px; flex: none; margin: 0 3px 0 4px; background: #dedede; }

.combo { height: 34px; display: flex; flex: none; border: 1px solid #c6c6c6; border-radius: 6px; background: #fff; color: #222; overflow: hidden; }
.combo input { flex: 1; padding: 0 9px; background: none; }
.combo button { width: 35px; border-left: 1px solid #c6c6c6; }
.combo svg path, .expand path { fill: none; stroke: #555; stroke-width: 1.2; }
.cjk { font-style: italic; font-size: 15px; }
.font-combo { width: 221px; margin-right: 8px; }
.size-combo { width: 101px; }
.name-combo { width: 173px; }

.workspace { flex: 1; min-height: 0; display: flex; }
.doc { flex: 1; min-width: 0; display: flex; flex-direction: column; }
.formula-bar { height: 39px; flex: none; display: flex; align-items: center; padding: 0 0 2px 4px; }
.formula-bar .sep { height: 25px; margin-right: 8px; }
.fbtn { width: 18px; height: 24px; margin-right: 3px; }
.fbtn.arrow { width: 16px; }
.formula { flex: 1; height: 24px; border: 1px solid #c6c6c6; background: #fff; }
.expand { width: 22px; height: 24px; padding-right: 4px; }

.infobar { height: 40px; flex: none; display: flex; align-items: center; padding: 0 5px 0 3px; background: #bce5f7; border: 1px solid #c4c4c4; color: #111; }
.infobar span { flex: 1; padding-left: 7px; }
.info-btn { height: 34px; padding: 0 17px; border: 1px solid #ccc; border-radius: 6px; background: #fff; color: #3d3d3d; }
.info-close { margin-left: 7px; }
.info-close path { stroke: #0b5394; stroke-width: 2; }

.sheet-area { flex: 1; min-height: 0; display: flex; }
.grid-clip { flex: 1; min-width: 0; overflow: hidden; background: #fff; }
.grid { width: 1822px; table-layout: fixed; border-collapse: separate; border-spacing: 0; }
.grid col { width: 77px; }
.grid .c-head { width: 41px; }
.grid .c-a { width: 167px; }
.grid .c-b { width: 250px; }
.grid .c-c { width: 172px; }
.grid .c-d { width: 277px; }
.grid .c-e { width: 145px; }
.grid th { height: 18px; padding: 0; font-weight: 400; line-height: 17px; background: #fafafa; border: 1px solid #999; border-width: 0 1px 1px 0; }
.grid thead th { height: 20px; padding-left: 2px; line-height: 19px; }
.grid th.on { background: #e95420; border-color: #d04a1b; color: #fff; font-weight: 700; }
.grid td { height: 18px; padding: 2px 2px 0 1px; position: relative; border: 1px solid #bfbfbf; border-width: 0 1px 1px 0; font: 15px/15px "DejaVu Sans", sans-serif; color: #000; text-align: right; white-space: nowrap; }
.grid .text { text-align: left; overflow: hidden; }
.grid .cut::before { content: ""; position: absolute; right: 0; top: 0; width: 3px; height: 17px; background: #fff; }
.grid .cut::after { content: ""; position: absolute; right: 0; top: 6px; border: 3px solid transparent; border-left: 3px solid #c9211e; border-right: 0; }
.marquee::before {
  content: "";
  position: absolute;
  inset: -1px -1px 0;
  background:
    repeating-linear-gradient(90deg, #000 0 4px, #fff 4px 6px) top / 100% 1px no-repeat,
    repeating-linear-gradient(#000 0 4px, #fff 4px 6px) left / 1px 100% no-repeat,
    repeating-linear-gradient(#000 0 4px, #fff 4px 6px) right / 1px 100% no-repeat;
}
.cursor-cell::before { content: ""; position: absolute; inset: -1px; border: 2px solid #e95420; z-index: 1; }
.cursor-cell::after { content: ""; position: absolute; right: -2px; bottom: -2px; width: 5px; height: 5px; background: #e95420; z-index: 1; }
.pointer { position: absolute; left: 141px; top: 9px; z-index: 2; }

.vscroll { width: 12px; flex: none; display: flex; flex-direction: column; align-items: center; }
.vsplit { width: 12px; height: 5px; background: linear-gradient(#000, #000) center / 6px 1px no-repeat #b8b8b8; }
.vthumb { width: 6px; height: 47.5%; margin-top: 4px; margin-right: 1px; border-radius: 3px; background: #888; }
.hscroll { height: 12px; flex: none; display: flex; align-items: center; justify-content: space-between; padding: 0 12px 0 4px; }
.hthumb { width: calc(46% + 8px); height: 6px; border-radius: 3px; background: #888; }
.hsplit { width: 5px; height: 12px; background: linear-gradient(#000, #000) center / 1px 8px no-repeat #b8b8b8; }
.tabs { height: 26px; flex: none; display: flex; align-items: stretch; padding-left: 10px; padding-bottom: 1px; border-bottom: 1px solid #b8b8b8; }
.nav-btn { width: 16px; margin-right: 9px; }
.nav-btn.add { margin: 0 11px 0 6px; }
.tab { width: 65px; background: #fff; border-bottom: 3px solid #999; font-size: 12px; font-weight: 700; }

.sidebar { width: 59px; flex: none; position: relative; display: flex; flex-direction: column; align-items: center; gap: 8px; padding-left: 2px; border-left: 1px solid #b8b8b8; border-bottom: 1px solid #b8b8b8; }
.side-menu { width: 34px; height: 39px; }
.side-btn { width: 36px; height: 34px; flex: none; }
.side-btn svg { width: 24px; height: 24px; }
.side-handle { position: absolute; left: -1px; top: 50%; width: 7px; height: 73px; margin-top: -37px; background: #999; }

.statusbar { height: 20px; flex: none; display: grid; grid-template-columns: 235px 234px 274px 275px 68px 29px 29px 29px 1fr 143px 49px; align-items: center; font-size: 12px; white-space: nowrap; }
.statusbar > span { height: 14px; display: flex; align-items: center; padding-left: 8px; border-right: 1px solid #dedede; }
.statusbar > span:first-child { padding-left: 10px; }
.statusbar > span:last-child { border: 0; }
.statusbar > .mid { justify-content: center; padding: 0; }
.zoom button { width: 12px; }
.zoom input { flex: 1; height: 12px; margin: 0 5px; appearance: none; background: linear-gradient(#999, #999) center / 100% 2px no-repeat; }
.statusbar > .zoom { padding: 0 4px 0 8px; }
.zoom input::-webkit-slider-thumb { appearance: none; width: 8px; height: 9px; border: 1px solid #555; border-radius: 4px; background: #fff; }
```
FILE: script.js
```js
// Sheet contents: columns A and C are regular series, B and D hold a few results.
const letters = ['', 'A', 'B', 'C', 'D', 'E', 'F', 'G', 'H', 'I', 'J', 'K', 'L', 'M', 'N', 'O'];
const titles = {
  A: 'Hanging mass (kilograms)',
  B: 'Acceleration of Block up Ramp',
  C: 'Hanging mass (kilograms)',
  D: 'Acceleration of Block down Ramp'
};
const results = { B2: '-2.2404726540447', B30: '1.70260610985298', D2: '-5.19723484172112' };
const pointer = '<svg class="pointer" width="18" height="26" viewBox="0 0 18 26"><path d="M1 1v20l4.500-4.500 3.500 8 3.500-1.500-3.500-7.500 7-.5z" fill="#333" stroke="#fff"/></svg>';

function valueAt(col, row) {
  if (row === 1) return titles[col] || '';
  if (row <= 30 && col === 'A') return String((40 + (row - 2) * 2) / 100);
  if (row <= 30 && col === 'C') return String((row - 2) * 2 / 100);
  return results[col + row] || '';
}

document.getElementById('heads').innerHTML =
  letters.map(l => `<th scope="col"${l === 'D' ? ' class="on"' : ''}>${l}</th>`).join('');

let html = '';
for (let r = 1; r <= 40; r++) {
  html += `<tr><th scope="row"${r === 3 ? ' class="on"' : ''}>${r}</th>`;
  for (const c of letters.slice(1)) {
    let cls = '';
    if (r === 1 && titles[c]) cls = c === 'A' || c === 'C' ? 'text cut' : 'text';
    if (c === 'D' && r === 2) cls = 'marquee';
    if (c === 'D' && r === 3) cls = 'cursor-cell';
    html += `<td${cls ? ` class="${cls}"` : ''}>${valueAt(c, r)}${cls === 'cursor-cell' ? pointer : ''}</td>`;
  }
  html += '</tr>';
}
document.getElementById('rows').innerHTML = html;
```
